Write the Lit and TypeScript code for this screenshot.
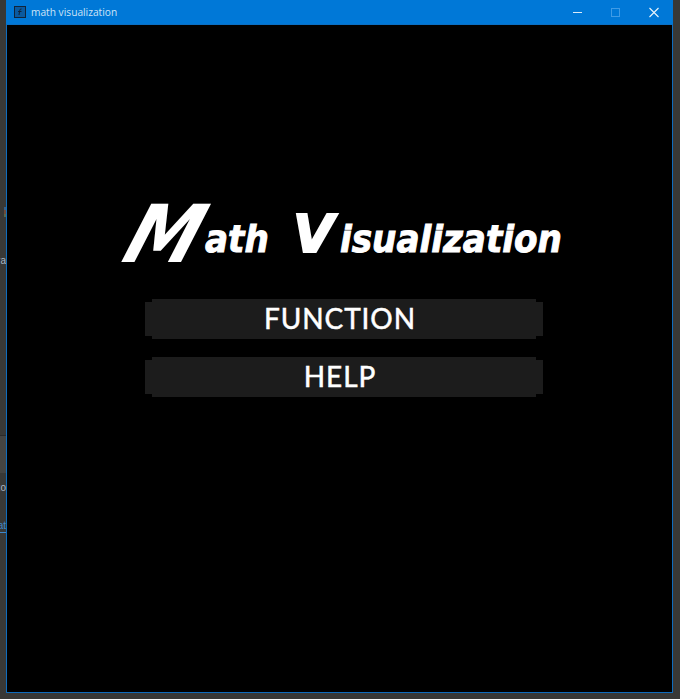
import { LitElement, html, css } from "lit";
import { customElement } from "lit/decorators.js";

@customElement("app-root")
export class AppRoot extends LitElement {
  static styles = css`
    :host { display: block; width: 680px; height: 699px; overflow: hidden; background: #383836; }
    .desk { display: flex; width: 680px; height: 699px; }
    .edge { width: 6px; height: 699px; flex: none; display: flex; flex-direction: column; overflow: hidden;
      font: 10px/12px "Liberation Sans", sans-serif; color: #a9b6c4; }
    .edge span { display: block; white-space: nowrap; direction: rtl; width: 6px; overflow: hidden; }
    .gap-a { height: 207px; flex: none; }
    .mark { height: 10px; width: 2px; flex: none; align-self: flex-end; background: linear-gradient(#3a5f85 0 30%, #6e4a38 30% 65%, #56664c 65%); }
    .gap-b { height: 38px; flex: none; }
    .gap-c { height: 168px; flex: none; }
    .band { height: 38px; flex: none; background: #444442; border-top: 1px solid #2a2a2a; box-sizing: border-box; }
    .gap-d { height: 9px; flex: none; }
    .gap-e { height: 26px; flex: none; }
    .edge .link { color: #3f87c8; border-bottom: 1px solid #3f87c8; }
    .window { width: 667px; height: 693px; flex: none; box-sizing: border-box; display: flex; flex-direction: column;
      border: 1px solid #0f6cbd; border-top: 0; background: #000; }
    .bar { height: 25px; flex: none; margin: 0 -1px; background: #0078d7; display: flex; align-items: center; color: #cfe4f6;
      font: 10.2px "Open Sans", sans-serif; border-bottom: 1px solid #0a6fc4; box-sizing: border-box; }
    .app-icon { width: 12px; height: 12px; margin-left: 8px; margin-right: 5px; flex: none; display: block; }
    .name { flex: 1; }
    .ctl { width: 38px; height: 25px; flex: none; display: block; }
    .main { flex: 1; display: flex; flex-direction: column; align-items: flex-start; padding-top: 165px; }
    .title { display: flex; align-items: baseline; margin-left: 113px; height: 70px; color: #fff;
      font-family: "DejaVu Sans", sans-serif; font-weight: 700; font-style: italic; white-space: nowrap; line-height: 70px; }
    .big-m { font-size: 80px; display: inline-block; transform-origin: 0 100%; transform: translate(-3px, 10px) scaleX(0.92) skewX(-20deg); width: 85px; }
    .rest { font-size: 38px; display: inline-block; transform-origin: 0 100%; transform: scaleX(0.9); -webkit-text-stroke: 1px #fff; }
    .ath { width: 90px; }
    .big-v { font-size: 52px; display: inline-block; transform-origin: 0 100%; transform: translateX(-2px) scaleX(1.02); width: 45px; -webkit-text-stroke: 2px #fff; }
    .menu { display: flex; flex-direction: column; gap: 18px; margin-left: 138px; margin-top: 39px; }
    .btn { width: 398px; height: 40px; box-sizing: border-box; padding: 0 8px 3px 0; background: #1c1c1c; display: flex; align-items: center; justify-content: center;
      color: #fff; font: 400 28px "Lato", sans-serif; letter-spacing: 0.9px; line-height: 1; -webkit-text-stroke: 0.5px #fff;
      clip-path: polygon(7px 0, 391px 0, 391px 3px, 398px 3px, 398px 37px, 391px 37px, 391px 40px, 7px 40px, 7px 37px, 0 37px, 0 3px, 7px 3px); }
  `;

  render() {
    return html`<div class="desk">
      <div class="edge">
        <div class="gap-a"></div>
        <div class="mark"></div>
        <div class="gap-b"></div>
        <span>ra</span>
        <div class="gap-c"></div>
        <div class="band"></div>
        <div class="gap-d"></div>
        <span>zo</span>
        <div class="gap-e"></div>
        <span class="link">at</span>
      </div>
      <div class="window">
        <div class="bar">
          <svg class="app-icon" viewBox="0 0 12 12">
            <rect x="0.5" y="0.5" width="11" height="11" fill="#0a5aa0" stroke="#10243a"/>
            <path d="M7.5 3 Q6 2.6 5.7 4.5 L5 9 M4 5.5 H7.5" fill="none" stroke="#10243a" stroke-width="1"/>
          </svg>
          <div class="name">math visualization</div>
          <svg class="ctl" viewBox="0 0 38 25"><path d="M14 12.5 H23" stroke="#dcebf8" stroke-width="1"/></svg>
          <svg class="ctl" viewBox="0 0 38 25"><rect x="14.5" y="8.5" width="8" height="8" fill="none" stroke="#3f9be6"/></svg>
          <svg class="ctl" viewBox="0 0 38 25"><path d="M14.5 8 L23.5 17 M23.5 8 L14.5 17" stroke="#eaf4fc" stroke-width="1.1"/></svg>
        </div>
        <div class="main">
          <div class="title">
            <span class="big-m">M</span><span class="rest ath">ath</span><span class="big-v">V</span><span class="rest">isualization</span>
          </div>
          <div class="menu">
            <div class="btn">FUNCTION</div>
            <div class="btn">HELP</div>
          </div>
        </div>
      </div>
    </div>`;
  }
}
